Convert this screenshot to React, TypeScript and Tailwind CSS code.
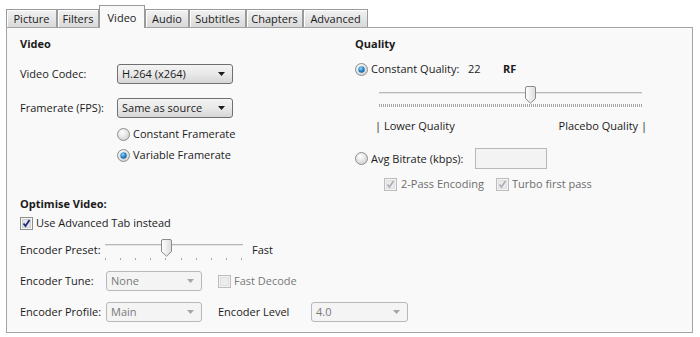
import React from "react";

const tabs = ["Picture", "Filters", "Video", "Audio", "Subtitles", "Chapters", "Advanced"];
const tabW: Record<string, string> = {
  Picture: "w-[51px]",
  Filters: "w-[42px]",
  Video: "w-[46px]",
  Audio: "w-[44px]",
  Subtitles: "w-[57px]",
  Chapters: "w-[57px]",
  Advanced: "w-[65px]",
};

function Radio({ checked }: { checked?: boolean }) {
  return (
    <svg width="13" height="13" viewBox="0 0 13 13" className="shrink-0">
      <defs>
        <radialGradient id="rbg" cx="0.4" cy="0.35" r="0.7">
          <stop offset="0" stopColor="#ffffff" />
          <stop offset="1" stopColor="#cfcfcf" />
        </radialGradient>
        <radialGradient id="rdot" cx="0.4" cy="0.35" r="0.7">
          <stop offset="0" stopColor="#9fd6f7" />
          <stop offset="0.5" stopColor="#2f8fd0" />
          <stop offset="1" stopColor="#1a5a96" />
        </radialGradient>
      </defs>
      <circle cx="6.5" cy="6.5" r="6" fill="url(#rbg)" stroke="#8e8f8f" />
      {checked && <circle cx="6.5" cy="6.5" r="3.2" fill="url(#rdot)" />}
    </svg>
  );
}

function Check({ checked, disabled }: { checked?: boolean; disabled?: boolean }) {
  return (
    <svg width="13" height="13" viewBox="0 0 13 13" className="shrink-0">
      <rect x="0.5" y="0.5" width="12" height="12" fill={disabled ? "#f3f3f3" : "#f6f6f6"} stroke={disabled ? "#bcbcbc" : "#8e8f8f"} />
      <rect x="2.5" y="2.5" width="8" height="8" fill={disabled ? "#ececec" : "#e3e3e3"} stroke={disabled ? "#e0e0e0" : "#cfcfcf"} />
      {checked && (
        <path
          d="M3.5 6.5 L5.5 9 L9.5 3"
          fill="none"
          stroke={disabled ? "#a9b1bd" : "#1f2a7a"}
          strokeWidth="1.8"
        />
      )}
    </svg>
  );
}

function Select({ value, w, disabled }: { value: string; w: string; disabled?: boolean }) {
  return (
    <div
      className={`${w} h-[20px] shrink-0 flex items-center justify-between pl-[4px] pr-[7px] rounded-[3px] border ${
        disabled
          ? "border-[#b5b9bc] bg-[#f4f4f4] text-[#7a7a7a]"
          : "border-[#707070] bg-gradient-to-b from-[#f3f3f3] via-[#e9e9e9] to-[#d6d6d6]"
      }`}
    >
      <span>{value}</span>
      <svg width="7" height="4" viewBox="0 0 7 4">
        <path d="M0 0 H7 L3.5 4 Z" fill={disabled ? "#a6a6a6" : "#1b1b1b"} />
      </svg>
    </div>
  );
}

function Thumb() {
  return (
    <svg width="11" height="18" viewBox="0 0 11 18">
      <defs>
        <linearGradient id="thg" x1="0" y1="0" x2="1" y2="0">
          <stop offset="0" stopColor="#ffffff" />
          <stop offset="1" stopColor="#dcdcdc" />
        </linearGradient>
      </defs>
      <path d="M0.5 2 Q0.5 0.5 2 0.5 H9 Q10.5 0.5 10.5 2 V12.5 L5.5 17.2 L0.5 12.5 Z" fill="url(#thg)" stroke="#8a8a8a" />
    </svg>
  );
}

function QualitySlider() {
  return (
    <div className="relative w-[263px] h-[24px] ml-[24px] mt-[6px]">
      <div className="absolute left-0 right-0 top-[8px] h-[2px] border-t border-[#b9b9b9] bg-[#e4e4e4]" />
      <div className="absolute left-0 right-0 top-[20px] h-[3px] bg-[repeating-linear-gradient(90deg,#a8a8a8_0_1px,transparent_1px_2px)]" />
      <div className="absolute left-[146px] top-[2px]">
        <Thumb />
      </div>
    </div>
  );
}

function PresetSlider() {
  const ticks = [0, 1, 2, 3, 4, 5, 6, 7, 8, 9];
  return (
    <div className="relative w-[138px] h-[22px] shrink-0">
      <div className="absolute left-0 right-0 top-[5px] h-[2px] border-t border-[#b9b9b9] bg-[#e4e4e4]" />
      {ticks.map((t) => (
        <div key={t} className="absolute top-[19px] w-px h-[2px] bg-[#a8a8a8]" style={{ left: Math.round(t * 15.1) }} />
      ))}
      <div className="absolute left-[56px] top-[0px]">
        <Thumb />
      </div>
    </div>
  );
}

export default function App() {
  return (
    <div className="w-[700px] h-[337px] bg-white pt-[5px] text-[11px] leading-[18px] text-[#1b1b1b] whitespace-nowrap font-['Segoe_UI','Open_Sans',sans-serif]">
      <div className="flex items-end pl-[6px] h-[22px]">
        {tabs.map((t) =>
          t === "Video" ? (
            <div
              key={t}
              className={`${tabW[t]} relative z-10 -mb-px h-[23px] pt-[3px] flex justify-center border-x border-t border-[#9a9a9a] bg-[#f9f9f9]`}
            >
              {t}
            </div>
          ) : (
            <div
              key={t}
              className={`${tabW[t]} h-[18px] flex justify-center border-x border-t border-[#9a9a9a] bg-gradient-to-b from-[#f2f2f2] to-[#d9d9d9] shadow-[inset_1px_1px_0_#ffffff]`}
            >
              {t}
            </div>
          )
        )}
      </div>

      <div className="ml-[6px] w-[687px] h-[306px] border border-[#a3a3a3] bg-[#f9f9f9] pl-[13px]">
        <div className="flex h-[165px]">
          <div className="w-[335px] shrink-0">
            <div className="mt-[7px] h-[18px] font-bold">Video</div>
            <div className="mt-[11px] h-[20px] flex items-center">
              <span className="w-[97px] shrink-0">Video Codec:</span>
              <Select w="w-[116px]" value="H.264 (x264)" />
            </div>
            <div className="mt-[14px] h-[20px] flex items-center">
              <span className="w-[97px] shrink-0">Framerate (FPS):</span>
              <Select w="w-[116px]" value="Same as source" />
            </div>
            <div className="mt-[7px] h-[18px] pl-[97px] flex items-center gap-[3px]">
              <Radio />
              <span>Constant Framerate</span>
            </div>
            <div className="mt-[3px] h-[18px] pl-[97px] flex items-center gap-[3px]">
              <Radio checked />
              <span>Variable Framerate</span>
            </div>
          </div>

          <div className="w-[330px]">
            <div className="mt-[7px] h-[18px] font-bold">Quality</div>
            <div className="mt-[7px] h-[18px] flex items-center">
              <Radio checked />
              <span className="ml-[3px] w-[97px] shrink-0">Constant Quality:</span>
              <span className="w-[35px] shrink-0">22</span>
              <span className="font-bold">RF</span>
            </div>
            <QualitySlider />
            <div className="mt-[9px] h-[18px] w-[272px] ml-[20px] flex justify-between">
              <span>| Lower Quality</span>
              <span>Placebo Quality |</span>
            </div>
            <div className="mt-[13px] h-[21px] flex items-center">
              <Radio />
              <span className="ml-[3px] w-[104px] shrink-0">Avg Bitrate (kbps):</span>
              <div className="w-[72px] h-[21px] border border-[#b8b8b8] bg-[#f3f3f3]" />
            </div>
            <div className="mt-[6px] h-[18px] pl-[29px] flex items-center text-[#6d6d6d]">
              <Check checked disabled />
              <span className="ml-[4px] w-[95px] shrink-0">2-Pass Encoding</span>
              <Check checked disabled />
              <span className="ml-[3px]">Turbo first pass</span>
            </div>
          </div>
        </div>

        <div className="mt-[2px] h-[18px] font-bold">Optimise Video:</div>
        <div className="mt-[1px] h-[18px] flex items-center gap-[3px]">
          <Check checked />
          <span>Use Advanced Tab instead</span>
        </div>
        <div className="mt-[7px] h-[22px] flex items-center">
          <span className="w-[85px] shrink-0">Encoder Preset:</span>
          <PresetSlider />
          <span className="ml-[9px]">Fast</span>
        </div>
        <div className="mt-[10px] h-[20px] flex items-center">
          <span className="w-[86px] shrink-0">Encoder Tune:</span>
          <Select w="w-[96px]" value="None" disabled />
          <div className="ml-[16px]">
            <Check disabled />
          </div>
          <span className="ml-[3px] text-[#7a7a7a]">Fast Decode</span>
        </div>
        <div className="mt-[11px] h-[20px] flex items-center">
          <span className="w-[86px] shrink-0">Encoder Profile:</span>
          <Select w="w-[96px]" value="Main" disabled />
          <span className="ml-[16px] w-[93px] shrink-0">Encoder Level</span>
          <Select w="w-[97px]" value="4.0" disabled />
        </div>
      </div>
    </div>
  );
}
